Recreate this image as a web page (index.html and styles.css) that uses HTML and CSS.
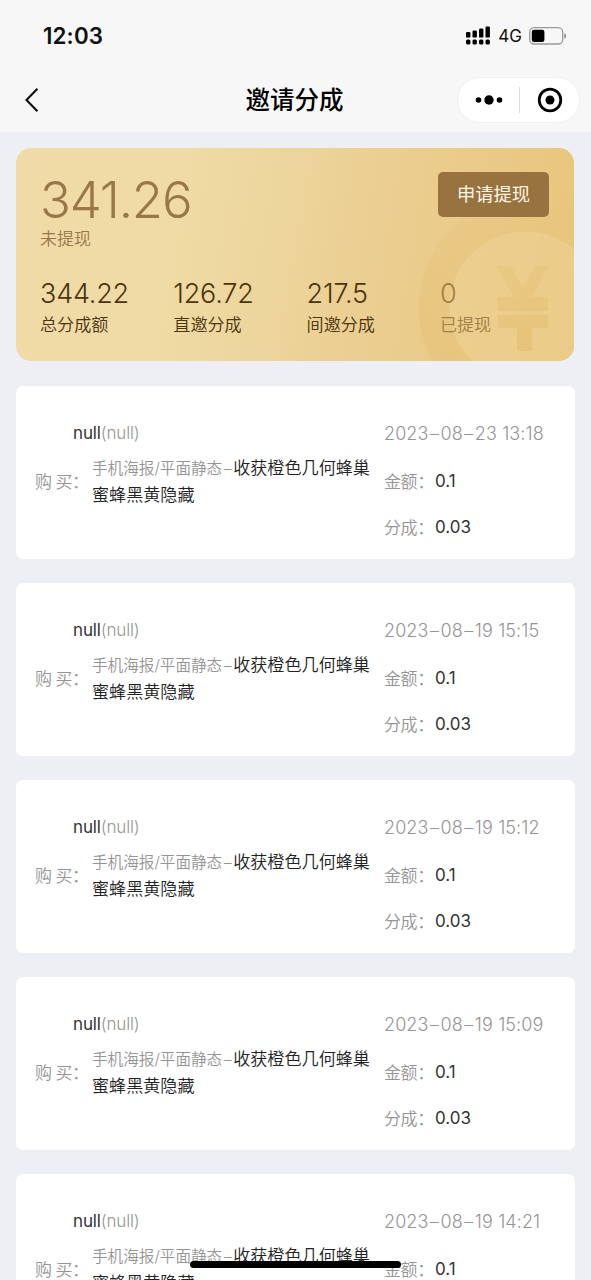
FILE: index.html
```html
<!DOCTYPE html>
<html lang="zh-CN">
<head>
<meta charset="utf-8">
<title>邀请分成</title>
<link rel="stylesheet" href="styles.css">
</head>
<body>
<div class="screen">
  <header class="header">
    <div class="status">
      <span class="time">12:03</span>
      <div class="status-icons">
        <svg class="signal" width="25" height="19" viewBox="0 0 25 19">
          <rect x="0" y="6" width="4.4" height="5.6" rx="1.2"/><rect x="6.5" y="4.5" width="4.4" height="7.1" rx="1.2"/><rect x="13" y="2.5" width="4.4" height="9.1" rx="1.2"/><rect x="19.5" y="0.5" width="4.4" height="11.1" rx="1.2"/>
          <rect x="0" y="13.4" width="4.4" height="5" rx="1.5"/><rect x="6.5" y="13.4" width="4.4" height="5" rx="1.5"/><rect x="13" y="13.4" width="4.4" height="5" rx="1.5"/><rect x="19.5" y="13.4" width="4.4" height="5" rx="1.5"/>
        </svg>
        <span class="network">4G</span>
        <svg class="battery" width="38" height="18" viewBox="0 0 38 18">
          <rect x="0.7" y="0.7" width="33" height="16.3" rx="4.5" fill="none" stroke="#999" stroke-width="1.3"/>
          <rect x="2.8" y="2.8" width="12.6" height="12.2" rx="2.2"/>
          <path d="M35.3 6.2c2.4.8 2.4 4.6 0 5.4z" fill="#888"/>
        </svg>
      </div>
    </div>
    <div class="nav">
      <svg class="back" width="14" height="26" viewBox="0 0 14 26"><path d="M12.4 1.8 1.5 13l10.9 11.2" fill="none" stroke="#111" stroke-width="2.1"/></svg>
      <h1 class="title">邀请分成</h1>
      <div class="capsule">
        <svg width="28" height="12" viewBox="0 0 28 12"><circle cx="3.5" cy="6" r="2.8"/><circle cx="14" cy="6" r="4.7"/><circle cx="24.5" cy="6" r="2.8"/></svg>
        <i class="capsule-line"></i>
        <svg width="26" height="26" viewBox="0 0 26 26"><circle cx="13" cy="13" r="10.8" fill="none" stroke="#000" stroke-width="2.8"/><circle cx="13" cy="13" r="4.5"/></svg>
      </div>
    </div>
  </header>

  <main class="content">
    <section class="summary">
      <svg class="coin" width="155" height="161" viewBox="0 0 155 161">
        <defs>
          <linearGradient id="ring" x1="0" y1="1" x2="1" y2="0"><stop offset="0" stop-color="#e3bd6c" stop-opacity=".45"/><stop offset=".7" stop-color="#e6c074" stop-opacity=".1"/></linearGradient>
          <linearGradient id="yen" x1="0" y1="0" x2="0" y2="1"><stop offset="0" stop-color="#e2bc6c" stop-opacity=".28"/><stop offset="1" stop-color="#e2bc6c" stop-opacity=".55"/></linearGradient>
        </defs>
        <circle cx="106" cy="107" r="91" fill="none" stroke="url(#ring)" stroke-width="31"/>
        <circle cx="106" cy="107" r="75.5" fill="#efd296" fill-opacity=".45"/>
        <path d="M77 66h15l12 21 12-21h14l-17 31h16v14H79V97h16zM79 115h50v13h-16v23H98v-23H79z" fill="url(#yen)"/>
      </svg>
      <div class="balance">
        <div>
          <div class="balance-value">341.26</div>
          <div class="balance-label">未提现</div>
        </div>
        <button class="withdraw">申请提现</button>
      </div>
      <div class="stats">
        <div class="stat"><div class="stat-value">344.22</div><div class="stat-label">总分成额</div></div>
        <div class="stat"><div class="stat-value">126.72</div><div class="stat-label">直邀分成</div></div>
        <div class="stat"><div class="stat-value">217.5</div><div class="stat-label">间邀分成</div></div>
        <div class="stat muted"><div class="stat-value">0</div><div class="stat-label">已提现</div></div>
      </div>
    </section>

    <article class="card">
      <div class="order"><div class="user">null<span>(null)</span></div>
        <div class="purchase"><span class="buy">购 买：</span><p class="goods"><span>手机海报/平面静态<i>–</i></span>收获橙色几何蜂巢蜜蜂黑黄隐藏</p></div></div>
      <div class="detail"><time class="date">2023<i>–</i>08<i>–</i>23 13:18</time><div class="amount"><span>金额：</span>0.1</div><div class="amount"><span>分成：</span>0.03</div></div>
    </article>
    <article class="card">
      <div class="order"><div class="user">null<span>(null)</span></div>
        <div class="purchase"><span class="buy">购 买：</span><p class="goods"><span>手机海报/平面静态<i>–</i></span>收获橙色几何蜂巢蜜蜂黑黄隐藏</p></div></div>
      <div class="detail"><time class="date">2023<i>–</i>08<i>–</i>19 15:15</time><div class="amount"><span>金额：</span>0.1</div><div class="amount"><span>分成：</span>0.03</div></div>
    </article>
    <article class="card">
      <div class="order"><div class="user">null<span>(null)</span></div>
        <div class="purchase"><span class="buy">购 买：</span><p class="goods"><span>手机海报/平面静态<i>–</i></span>收获橙色几何蜂巢蜜蜂黑黄隐藏</p></div></div>
      <div class="detail"><time class="date">2023<i>–</i>08<i>–</i>19 15:12</time><div class="amount"><span>金额：</span>0.1</div><div class="amount"><span>分成：</span>0.03</div></div>
    </article>
    <article class="card">
      <div class="order"><div class="user">null<span>(null)</span></div>
        <div class="purchase"><span class="buy">购 买：</span><p class="goods"><span>手机海报/平面静态<i>–</i></span>收获橙色几何蜂巢蜜蜂黑黄隐藏</p></div></div>
      <div class="detail"><time class="date">2023<i>–</i>08<i>–</i>19 15:09</time><div class="amount"><span>金额：</span>0.1</div><div class="amount"><span>分成：</span>0.03</div></div>
    </article>
    <article class="card">
      <div class="order"><div class="user">null<span>(null)</span></div>
        <div class="purchase"><span class="buy">购 买：</span><p class="goods"><span>手机海报/平面静态<i>–</i></span>收获橙色几何蜂巢蜜蜂黑黄隐藏</p></div></div>
      <div class="detail"><time class="date">2023<i>–</i>08<i>–</i>19 14:21</time><div class="amount"><span>金额：</span>0.1</div><div class="amount"><span>分成：</span>0.03</div></div>
    </article>
  </main>
  <div class="home-bar"></div>
</div>
</body>
</html>
```
FILE: styles.css
```css
* { box-sizing: border-box; }
body { margin: 0; font-family: Inter, "Noto Sans CJK SC", sans-serif; background: #eeeff4; color: #333; }
.screen { position: relative; width: 591px; height: 1280px; overflow: hidden; }

.header { height: 132px; background: #f7f7f7; }
.status { display: flex; justify-content: space-between; align-items: center; height: 71px; padding: 0 24px 0 43px; }
.time { font-size: 22.3px; font-weight: 600; color: #111; letter-spacing: .15px; }
.status-icons { display: flex; align-items: center; }
.network { margin: 0 7px 0 7px; font-size: 17px; color: #111; letter-spacing: 0; }
.nav { display: grid; grid-template-columns: 1fr auto 1fr; align-items: center; height: 58px; padding: 0 11px 0 25px; }
.title { margin: 0 0 0 -16px; font-size: 24.5px; line-height: 36px; font-weight: 500; color: #000; }
.capsule { justify-self: end; display: flex; align-items: center; justify-content: space-between; width: 123px; height: 46px; padding: 0 16px 0 17px; border: 1px solid #f0f0f0; border-radius: 23px; background: #fff; }
.capsule-line { width: 1px; height: 26px; margin-right: 2px; background: #ddd; }

.content { display: flex; flex-direction: column; gap: 24px; padding: 16px 16px 0; }
.summary { position: relative; width: 558px; height: 213px; margin-bottom: 1px; padding: 24px 25px 0 24px; border-radius: 15px; overflow: hidden; background: linear-gradient(100deg, #f0dba8 0%, #f0dba6 28%, #ecd49a 50%, #ebce92 62%, #e8c57b 100%); }
.coin { position: absolute; right: 0; bottom: 0; }
.balance { position: relative; display: flex; justify-content: space-between; align-items: flex-start; height: 106px; color: #98784a; }
.balance-value { font-size: 51px; line-height: 56px; font-weight: 350; letter-spacing: -1.2px; }
.balance-label { font-size: 17px; line-height: 22px; font-weight: 350; }
.withdraw { width: 111px; height: 45px; padding: 0; border: 0; border-radius: 5px; background: #99733f; color: #fff6e6; font: 400 18.3px/45px Inter, "Noto Sans CJK SC", sans-serif; }
.stats { position: relative; display: grid; grid-template-columns: repeat(4, 133.3px); color: #4b330b; }
.stat-value { font-size: 27px; line-height: 32px; font-weight: 350; letter-spacing: -.2px; }
.stat-label { margin-top: 2px; font-size: 17.1px; line-height: 26px; font-weight: 350; }
.muted { color: #a37f45; }

.card { display: grid; grid-template-columns: 349px 1fr; flex: none; width: 559px; height: 173px; padding: 34px 0 0 19px; border-radius: 7px; background: #fff; }
.user { padding-left: 38px; font-size: 17px; line-height: 26px; letter-spacing: -.15px; }
.user span, .date, .amount span, .buy, .goods span { color: #959595; font-weight: 350; }
.purchase { display: flex; align-items: center; margin-top: 9px; }
.buy { flex: none; width: 57px; margin-top: -2px; font-size: 17px; letter-spacing: -.6px; white-space: nowrap; }
.goods { width: 284px; margin: 0; font-size: 17.1px; line-height: 26px; font-weight: 350; color: #222; word-break: break-all; }
.goods span { font-size: 15.6px; }
.date i, .goods i { display: inline-block; width: 12px; font-style: normal; text-align: center; }
.goods i { width: 11px; }
.date { display: block; font-size: 18px; line-height: 28px; letter-spacing: .1px; white-space: nowrap; }
.amount { display: flex; align-items: center; height: 46px; font-size: 17px; }
.date + .amount { margin-top: 10px; }
.amount span { width: 51px; margin-top: -2px; letter-spacing: -.4px; white-space: nowrap; }

.home-bar { position: absolute; left: 190px; top: 1261px; width: 211px; height: 7px; border-radius: 4px; background: #000; }
```
